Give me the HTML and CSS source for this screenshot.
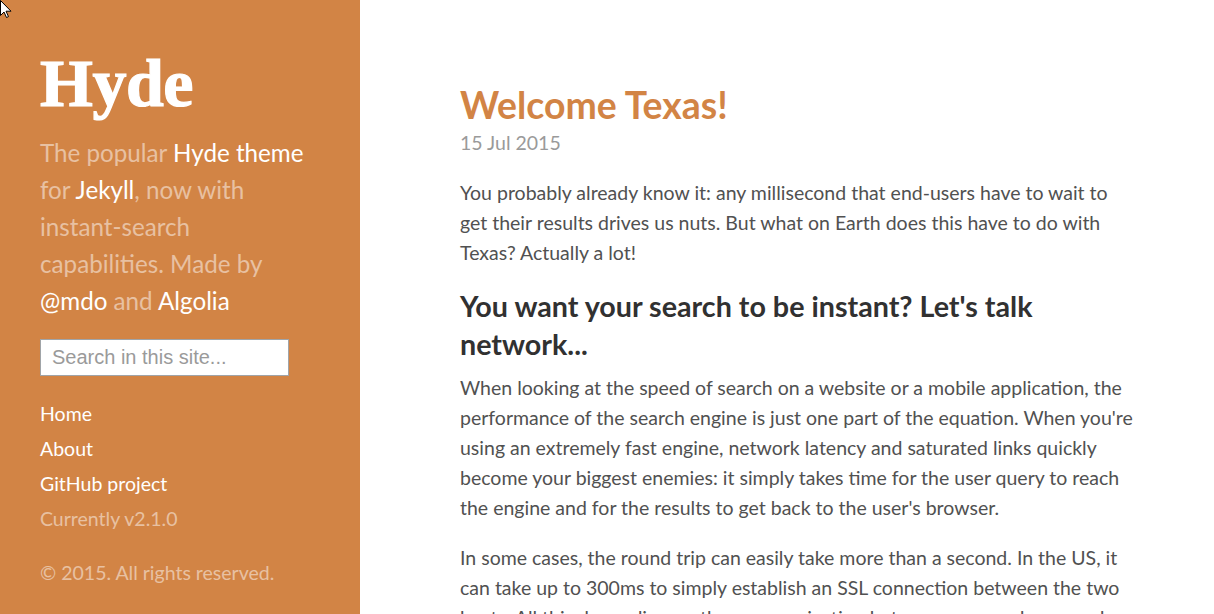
FILE: index.html
```
<!DOCTYPE html>
<html lang="en">
<head>
<meta charset="utf-8">
<title>Welcome Texas! · Hyde</title>
<link rel="stylesheet" href="styles.css">
</head>
<body>
<aside class="sidebar">
  <div class="sidebar-about">
    <h1 class="brand">Hyde</h1>
    <p class="lead">The popular <a href="#">Hyde theme</a> for <a href="#">Jekyll</a>, now with instant-search capabilities. Made by <a href="#">@mdo</a> and <a href="#">Algolia</a></p>
  </div>
  <input class="search" type="text" placeholder="Search in this site...">
  <nav class="sidebar-nav">
    <a class="nav-item" href="#">Home</a>
    <a class="nav-item" href="#">About</a>
    <a class="nav-item" href="#">GitHub project</a>
    <span class="nav-item muted">Currently v2.1.0</span>
  </nav>
  <p class="copyright">&copy; 2015. All rights reserved.</p>
</aside>
<main class="content">
  <article class="post">
    <h1 class="post-title">Welcome Texas!</h1>
    <span class="post-date">15 Jul 2015</span>
    <p>You probably already know it: any millisecond that end-users have to wait to get their results drives us nuts. But what on Earth does this have to do with Texas? Actually a lot!</p>
    <h2>You want your search to be instant? Let's talk network...</h2>
    <p>When looking at the speed of search on a website or a mobile application, the performance of the search engine is just one part of the equation. When you're using an extremely fast engine, network latency and saturated links quickly become your biggest enemies: it simply takes time for the user query to reach the engine and for the results to get back to the user's browser.</p>
    <p>In some cases, the round trip can easily take more than a second. In the US, it can take up to 300ms to simply establish an SSL connection between the two hosts. All this depending on the communication between your end-user and your backend.</p>
  </article>
</main>
<svg class="cursor" width="12" height="19" viewBox="0 0 12 19" aria-hidden="true">
  <path d="M0.5 0.5 L0.5 15.5 L4 12 L6.5 17.5 L8.5 16.6 L6 11.2 L11 11.2 Z" fill="#fff" stroke="#000" stroke-width="1" stroke-linejoin="round"/>
</svg>
</body>
</html>
```

FILE: styles.css
```
* { box-sizing: border-box; }
html, body { margin: 0; padding: 0; }
body {
  display: flex;
  align-items: flex-start;
  font-family: Lato, "Liberation Sans", sans-serif;
  font-size: 19.5px;
  line-height: 30px;
  color: #515151;
  background: #fff;
}
a { text-decoration: none; }
.sidebar {
  flex: 0 0 360px;
  width: 360px;
  min-height: 100vh;
  background: #d28445;
  color: rgba(255,255,255,.5);
  padding: 43px 40px 20px;
  display: flex;
  flex-direction: column;
}
.sidebar a { color: #fff; }
.brand {
  margin: 0 0 11px;
  font-family: "Liberation Serif", serif;
  font-weight: 700;
  font-size: 68px;
  line-height: 80px;
  color: #fff;
  -webkit-text-stroke: 1.2px #fff;
  letter-spacing: -0.5px;
}
.lead {
  margin: 0;
  font-size: 24.2px;
  line-height: 37px;
}
.search {
  margin-top: 20px;
  width: 249px;
  height: 37px;
  border: 1px solid #a0a4a8;
  padding: 0 11px;
  font-family: "Liberation Sans", Arial, sans-serif;
  font-size: 20px;
  color: #333;
  background: #fff;
}
.search::placeholder { color: #9a9a9a; }
.sidebar-nav {
  margin-top: 20px;
  display: flex;
  flex-direction: column;
  line-height: 35px;
}
.nav-item { display: block; }
.muted { color: rgba(255,255,255,.5); }
.copyright { margin: 21.5px 0 0; }
.content {
  padding: 80px 40px 80px 100px;
  flex: 1;
}
.post { max-width: 676px; }
.post-title {
  margin: 0 0 10px;
  font-size: 37.4px;
  line-height: 50px;
  color: #d28445;
}
.post-date {
  display: block;
  margin: -12px 0 20px;
  color: #9a9a9a;
}
.post p { margin: 0 0 20px; }
.post h2 {
  margin: 20px 0 10px;
  font-size: 28.7px;
  line-height: 37.5px;
  color: #313131;
}
.cursor { position: fixed; left: 0; top: 0; }
```
